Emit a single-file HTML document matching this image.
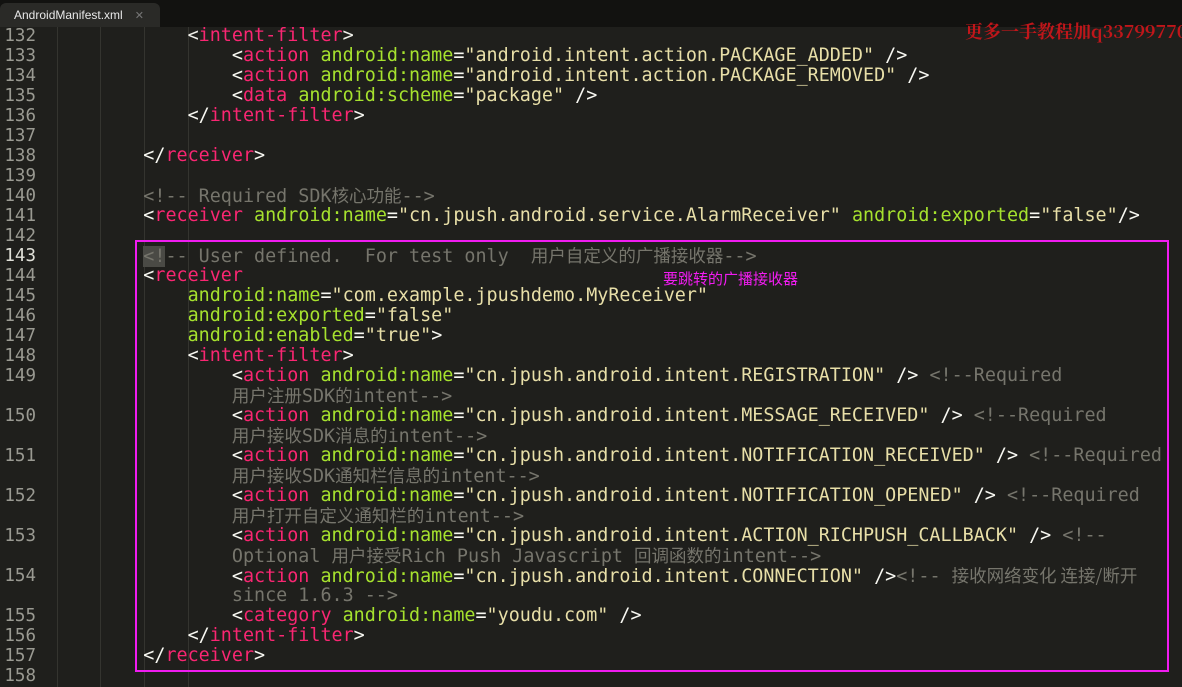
<!DOCTYPE html>
<html><head><meta charset="utf-8"><style>
body{margin:0;width:1182px;height:686px;overflow:hidden;background:#1f1f1c;position:relative;font-family:"DejaVu Sans Mono","Liberation Mono","Noto Sans CJK SC",monospace;}
#tabbar{position:absolute;left:0;top:0;width:1182px;height:27px;background:#121210;}
#tab{position:absolute;left:0;top:3px;width:160px;height:24px;background:#2a2a27;border-radius:6px 6px 0 0;color:#e8e8e8;font:12px "Liberation Sans",sans-serif;line-height:24px;padding-left:14px;box-sizing:border-box}
#tab span{color:#777;margin-left:12px;font-size:11px}
.r{position:absolute;left:0;height:20px;line-height:20px;white-space:pre;font-size:18.4px;color:#f8f8f2}
.n{position:absolute;left:0;width:36px;text-align:right;color:#9a9a92;font-size:17.5px}
.c{position:absolute;left:99px;letter-spacing:0}
.t{color:#f92672}.a{color:#a6e22e}.s{color:#e8dfa8}.m{color:#76756c}.p{color:#f0f0ea}
.g{position:absolute;top:27px;width:1px;height:660px;background:#34342f}
#box{position:absolute;left:135px;top:240px;width:1030px;height:428px;border:2px solid #f01cf0}
#lbl{position:absolute;left:663px;top:268px;color:#f01cf0;font:15px "Noto Sans CJK SC",sans-serif}
#wm{position:absolute;left:965px;top:18px;color:#c0161a;font:bold 18px "Noto Serif CJK SC","Liberation Serif",serif;white-space:nowrap}
.cjk{font-family:"Noto Sans CJK SC",sans-serif;font-size:17.5px}
</style></head><body>
<div id="tabbar"><div id="tab">AndroidManifest.xml<span>✕</span></div></div>
<div class="g" style="left:57px"></div><div class="g" style="left:100px"></div><div class="g" style="left:144px"></div><div class="g" style="left:188px"></div>
<div class="r" style="top:26px"><span class="n">132</span><span class="c">        <span class="p">&lt;</span><span class="t">intent-filter</span><span class="p">&gt;</span></span></div>
<div class="r" style="top:46px"><span class="n">133</span><span class="c">            &lt;<span class="t">action</span> <span class="a">android:name</span>=<span class="s">"android.intent.action.PACKAGE_ADDED"</span> /&gt;</span></div>
<div class="r" style="top:66px"><span class="n">134</span><span class="c">            &lt;<span class="t">action</span> <span class="a">android:name</span>=<span class="s">"android.intent.action.PACKAGE_REMOVED"</span> /&gt;</span></div>
<div class="r" style="top:86px"><span class="n">135</span><span class="c">            &lt;<span class="t">data</span> <span class="a">android:scheme</span>=<span class="s">"package"</span> /&gt;</span></div>
<div class="r" style="top:106px"><span class="n">136</span><span class="c">        &lt;/<span class="t">intent-filter</span>&gt;</span></div>
<div class="r" style="top:126px"><span class="n">137</span></div>
<div class="r" style="top:146px"><span class="n">138</span><span class="c">    &lt;/<span class="t">receiver</span>&gt;</span></div>
<div class="r" style="top:166px"><span class="n">139</span></div>
<div class="r" style="top:186px"><span class="n">140</span><span class="c">    <span class="m">&lt;!-- Required SDK<span class="cjk">核心功能</span>--&gt;</span></span></div>
<div class="r" style="top:206px"><span class="n">141</span><span class="c">    &lt;<span class="t">receiver</span> <span class="a">android:name</span>=<span class="s">"cn.jpush.android.service.AlarmReceiver"</span> <span class="a">android:exported</span>=<span class="s">"false"</span>/&gt;</span></div>
<div class="r" style="top:226px"><span class="n">142</span></div>
<div class="r" style="top:246px"><span class="n" style="color:#e0e0d8">143</span><span class="c">    <span class="m"><span style="background:#4a4a45">&lt;!</span>-- User defined.  For test only  <span class="cjk">用户自定义的广播接收器</span>--&gt;</span></span></div>
<div class="r" style="top:266px"><span class="n">144</span><span class="c">    &lt;<span class="t">receiver</span></span></div>
<div class="r" style="top:286px"><span class="n">145</span><span class="c">        <span class="a">android:name</span>=<span class="s">"com.example.jpushdemo.MyReceiver"</span></span></div>
<div class="r" style="top:306px"><span class="n">146</span><span class="c">        <span class="a">android:exported</span>=<span class="s">"false"</span></span></div>
<div class="r" style="top:326px"><span class="n">147</span><span class="c">        <span class="a">android:enabled</span>=<span class="s">"true"</span>&gt;</span></div>
<div class="r" style="top:346px"><span class="n">148</span><span class="c">        &lt;<span class="t">intent-filter</span>&gt;</span></div>
<div class="r" style="top:366px"><span class="n">149</span><span class="c">            &lt;<span class="t">action</span> <span class="a">android:name</span>=<span class="s">"cn.jpush.android.intent.REGISTRATION"</span> /&gt; <span class="m">&lt;!--Required</span></span></div>
<div class="r" style="top:386px"><span class="c">            <span class="m"><span class="cjk">用户注册</span>SDK<span class="cjk">的</span>intent--&gt;</span></span></div>
<div class="r" style="top:406px"><span class="n">150</span><span class="c">            &lt;<span class="t">action</span> <span class="a">android:name</span>=<span class="s">"cn.jpush.android.intent.MESSAGE_RECEIVED"</span> /&gt; <span class="m">&lt;!--Required</span></span></div>
<div class="r" style="top:426px"><span class="c">            <span class="m"><span class="cjk">用户接收</span>SDK<span class="cjk">消息的</span>intent--&gt;</span></span></div>
<div class="r" style="top:446px"><span class="n">151</span><span class="c">            &lt;<span class="t">action</span> <span class="a">android:name</span>=<span class="s">"cn.jpush.android.intent.NOTIFICATION_RECEIVED"</span> /&gt; <span class="m">&lt;!--Required</span></span></div>
<div class="r" style="top:466px"><span class="c">            <span class="m"><span class="cjk">用户接收</span>SDK<span class="cjk">通知栏信息的</span>intent--&gt;</span></span></div>
<div class="r" style="top:486px"><span class="n">152</span><span class="c">            &lt;<span class="t">action</span> <span class="a">android:name</span>=<span class="s">"cn.jpush.android.intent.NOTIFICATION_OPENED"</span> /&gt; <span class="m">&lt;!--Required</span></span></div>
<div class="r" style="top:506px"><span class="c">            <span class="m"><span class="cjk">用户打开自定义通知栏的</span>intent--&gt;</span></span></div>
<div class="r" style="top:526px"><span class="n">153</span><span class="c">            &lt;<span class="t">action</span> <span class="a">android:name</span>=<span class="s">"cn.jpush.android.intent.ACTION_RICHPUSH_CALLBACK"</span> /&gt; <span class="m">&lt;!--</span></span></div>
<div class="r" style="top:546px"><span class="c">            <span class="m">Optional <span class="cjk">用户接受</span>Rich Push Javascript <span class="cjk">回调函数的</span>intent--&gt;</span></span></div>
<div class="r" style="top:566px"><span class="n">154</span><span class="c">            &lt;<span class="t">action</span> <span class="a">android:name</span>=<span class="s">"cn.jpush.android.intent.CONNECTION"</span> /&gt;<span class="m">&lt;!-- <span class="cjk">接收网络变化 连接/断开</span></span></span></div>
<div class="r" style="top:586px"><span class="c">            <span class="m">since 1.6.3 --&gt;</span></span></div>
<div class="r" style="top:606px"><span class="n">155</span><span class="c">            &lt;<span class="t">category</span> <span class="a">android:name</span>=<span class="s">"youdu.com"</span> /&gt;</span></div>
<div class="r" style="top:626px"><span class="n">156</span><span class="c">        &lt;/<span class="t">intent-filter</span>&gt;</span></div>
<div class="r" style="top:646px"><span class="n">157</span><span class="c">    &lt;/<span class="t">receiver</span>&gt;</span></div>
<div class="r" style="top:666px"><span class="n">158</span></div>
<div id="box"></div>
<div id="lbl">要跳转的广播接收器</div>
<div id="wm">更多一手教程加q33799770</div>
</body></html>
